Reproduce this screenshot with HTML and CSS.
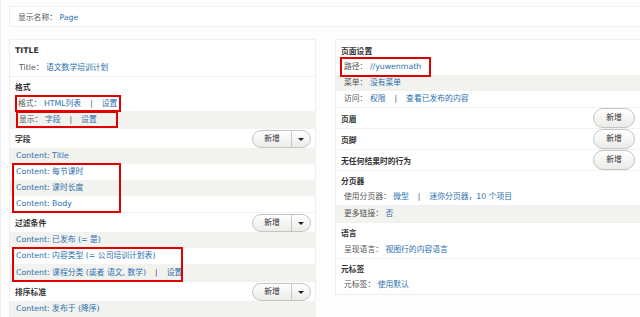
FILE: index.html
```html
<!DOCTYPE html>
<html lang="zh-CN">
<head>
    <meta charset="UTF-8">
    <title>视图编辑</title>
    <link rel="stylesheet" href="styles.css">
</head>
<body>
    <div class="page">
        <div class="panel display-name">
            <span class="label">显示名称：</span> <a href="#">Page</a>
        </div>

        <div class="columns">
            <div class="panel column">
                <div class="bucket">
                    <div class="bucket-title">TITLE</div>
                    <div class="row row-tall"><span class="label">Title：</span> <a href="#">语文数学培训计划</a></div>
                </div>

                <div class="bucket bucket-line">
                    <div class="bucket-title">格式</div>
                    <div class="row row-label"><span class="mark mark-format"><span class="label">格式：</span> <a href="#">HTML列表</a><span class="sep">|</span><a href="#">设置</a></span></div>
                    <div class="row row-label row-show odd"><span class="mark mark-show"><span class="label">显示：</span> <a href="#">字段</a><span class="sep">|</span><a href="#">设置</a></span></div>
                </div>

                <div class="bucket">
                    <div class="bucket-title">字段
                        <span class="btn btn-split"><span class="btn-main">新增</span><span class="btn-arrow"></span></span>
                    </div>
                    <div class="row odd"><a href="#">Content: Title</a></div>
                    <div class="group group-fields">
                        <div class="row"><a href="#">Content: 每节课时</a></div>
                        <div class="row odd"><a href="#">Content: 课时长度</a></div>
                        <div class="row"><a href="#">Content: Body</a></div>
                    </div>
                </div>

                <div class="bucket bucket-line">
                    <div class="bucket-title">过滤条件
                        <span class="btn btn-split"><span class="btn-main">新增</span><span class="btn-arrow"></span></span>
                    </div>
                    <div class="row odd"><a href="#">Content: 已发布 (= 是)</a></div>
                    <div class="group group-filters">
                        <div class="row"><a href="#">Content: 内容类型 (= 公司培训计划表)</a></div>
                        <div class="row row-17 odd"><a href="#">Content: 课程分类 (或者 语文, 数学)</a><span class="sep">|</span><a href="#">设置</a></div>
                    </div>
                </div>

                <div class="bucket bucket-line">
                    <div class="bucket-title">排序标准
                        <span class="btn btn-split"><span class="btn-main">新增</span><span class="btn-arrow"></span></span>
                    </div>
                    <div class="row odd"><a href="#">Content: 发布于 (降序)</a></div>
                </div>
            </div>

            <div class="panel column column-right">
                <div class="bucket">
                    <div class="bucket-title">页面设置</div>
                    <div class="row row-label"><span class="mark mark-path"><span class="label">路径：</span> <a href="#">//yuwenmath</a></span></div>
                    <div class="row row-label odd"><span class="label">菜单：</span> <a href="#">没有菜单</a></div>
                    <div class="row row-label"><span class="label">访问：</span> <a href="#">权限</a><span class="sep">|</span><a href="#">查看已发布的内容</a></div>
                </div>

                <div class="bucket bucket-line bucket-add">
                    <div class="bucket-title">页眉 <span class="btn"><span class="btn-main">新增</span></span></div>
                </div>
                <div class="bucket bucket-line bucket-add">
                    <div class="bucket-title">页脚 <span class="btn"><span class="btn-main">新增</span></span></div>
                </div>
                <div class="bucket bucket-line bucket-add">
                    <div class="bucket-title">无任何结果时的行为 <span class="btn"><span class="btn-main">新增</span></span></div>
                </div>

                <div class="bucket bucket-line">
                    <div class="bucket-title">分页器</div>
                    <div class="row row-label"><span class="label">使用分页器：</span> <a href="#">微型</a><span class="sep">|</span><a href="#">迷你分页器，10 个项目</a></div>
                    <div class="row row-label row-17 odd"><span class="label">更多链接：</span> <a href="#">否</a></div>
                </div>

                <div class="bucket bucket-line">
                    <div class="bucket-title bucket-title-19">语言</div>
                    <div class="row row-label"><span class="label">呈现语言：</span> <a href="#">视图行的内容语言</a></div>
                </div>

                <div class="bucket bucket-line">
                    <div class="bucket-title">元标签</div>
                    <div class="row row-label"><span class="label">元标签：</span> <a href="#">使用默认</a></div>
                </div>
            </div>
        </div>
    </div>
</body>
</html>
```

FILE: styles.css
```css
body {
    margin: 0;
    background-color: #fdfdfd;
    font-family: "DejaVu Sans", "Noto Sans CJK SC", sans-serif;
    font-size: 7.8px;
    color: #444;
    overflow: hidden;
}

a {
    color: #2a6fae;
    text-decoration: none;
}

.page {
    min-height: 317px;
    padding: 6px 0 0 8px;
    border-left: 3px solid #ececec;
    box-sizing: border-box;
    margin-left: -2px;
}

.panel {
    background-color: #fff;
    border: 1px solid #efefef;
}

.display-name {
    width: 660px;
    height: 21px;
    line-height: 21px;
    padding-left: 8px;
    box-sizing: border-box;
}

.label {
    color: #555;
}

.columns {
    display: grid;
    grid-template-columns: 307px 320px;
    column-gap: 19px;
    margin-top: 12px;
    align-items: start;
}

.column {
    padding: 1px 0;
}

.bucket-line {
    border-top: 1px solid #f1f1f1;
}

.bucket-title {
    display: flex;
    align-items: center;
    justify-content: space-between;
    min-height: 18px;
    padding: 0 4px 0 5px;
    font-weight: bold;
    color: #333;
}

.bucket-title:has(.btn),
.bucket-title-19 {
    min-height: 19px;
}

.row {
    height: 16px;
    line-height: 16px;
    padding-left: 6px;
    white-space: nowrap;
}

.row-17 {
    height: 17px;
    line-height: 17px;
}

.row-tall {
    height: 17px;
    line-height: 17px;
    padding-left: 9px;
}

.row-label {
    padding-left: 8px;
}

.row-show {
    height: 18px;
    line-height: 18px;
}

.odd {
    background-color: #f2f2ee;
}

.sep {
    color: #555;
    margin: 0 9px;
}

/* red annotation frames */
.mark {
    display: inline-block;
    line-height: 13px;
    border: 2px solid #e10000;
    padding: 0 2px 0 1px;
    margin-left: -3px;
    vertical-align: middle;
}

.mark-show {
    width: 95px;
    margin-left: -2px;
}

.mark-path {
    line-height: 16px;
    padding: 0 8px 0 2px;
    margin: -2px 0 -2px -4px;
}

.group {
    position: relative;
}

.group::after {
    content: "";
    position: absolute;
    left: 2px;
    top: -1px;
    bottom: -1px;
    border: 2px solid #e10000;
}

.group-fields::after {
    width: 105px;
}

.group-filters::after {
    width: 167px;
}

.btn {
    display: inline-flex;
    height: 18px;
    border: 1px solid #c4c4c4;
    border-radius: 10px;
    background: linear-gradient(#ffffff, #ebebe8);
    box-sizing: border-box;
    font-weight: normal;
    color: #333;
}

.btn-main {
    width: 40px;
    line-height: 16px;
    text-align: center;
}

.btn-split .btn-main {
    width: 38px;
    border-right: 1px solid #c8c8c8;
}

.btn-arrow {
    width: 18px;
    position: relative;
}

.btn-arrow::after {
    content: "";
    position: absolute;
    left: 6px;
    top: 7px;
    border-left: 3px solid transparent;
    border-right: 3px solid transparent;
    border-top: 3px solid #222;
}

.column-right .bucket-title {
    padding-right: 19px;
}

.column-right .btn {
    height: 20px;
}

.column-right .btn-main {
    line-height: 18px;
}

.bucket-add .bucket-title {
    min-height: 20px;
}
```
